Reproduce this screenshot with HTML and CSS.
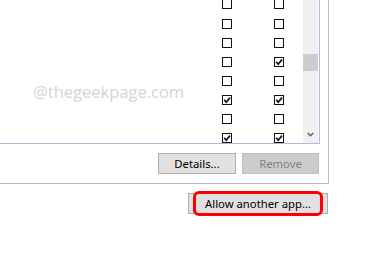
FILE: index.html
```html
<!DOCTYPE html>
<html>
<head>
<meta charset="utf-8">
<link rel="stylesheet" href="styles.css">
</head>
<body>
<div class="group">
  <div class="list">
    <div class="rows">
      <div class="row"><span class="cb"></span><span class="cb"></span></div>
      <div class="row"><span class="cb"></span><span class="cb"></span></div>
      <div class="row"><span class="cb"></span><span class="cb"></span></div>
      <div class="row"><span class="cb"></span><span class="cb on"><svg viewBox="0 0 8 8"><path d="M1.2 3.8 L3.2 6.2 L7 1.6"/></svg></span></div>
      <div class="row"><span class="cb"></span><span class="cb"></span></div>
      <div class="row"><span class="cb on"><svg viewBox="0 0 8 8"><path d="M1.2 3.8 L3.2 6.2 L7 1.6"/></svg></span><span class="cb on"><svg viewBox="0 0 8 8"><path d="M1.2 3.8 L3.2 6.2 L7 1.6"/></svg></span></div>
      <div class="row"><span class="cb"></span><span class="cb"></span></div>
      <div class="row"><span class="cb on"><svg viewBox="0 0 8 8"><path d="M1.2 3.8 L3.2 6.2 L7 1.6"/></svg></span><span class="cb on"><svg viewBox="0 0 8 8"><path d="M1.2 3.8 L3.2 6.2 L7 1.6"/></svg></span></div>
      <div class="watermark">@thegeekpage.com</div>
    </div>
    <div class="scrollbar">
      <div class="thumb"></div>
      <svg class="down" viewBox="0 0 8 5"><path d="M0.8 0.8 L4 4 L7.2 0.8"/></svg>
    </div>
  </div>
  <div class="actions">
    <button class="btn details">Details...</button>
    <button class="btn remove">Remove</button>
  </div>
</div>
<div class="footer">
  <div class="allow-wrap">
    <button class="btn allow">Allow another app...</button>
    <div class="highlight"></div>
  </div>
</div>
</body>
</html>
```
FILE: styles.css
```css
html, body {
  margin: 0;
  padding: 0;
  background: #ffffff;
}
body {
  width: 377px;
  height: 260px;
  overflow: hidden;
  font-family: "Noto Sans", "DejaVu Sans", sans-serif;
}
.group {
  width: 328px;
  height: 183px;
  border-right: 1px solid #b6b7dc;
  border-bottom: 1px solid #b6b7dc;
  display: flex;
  flex-direction: column;
}
.list {
  width: 319px;
  height: 143px;
  border-right: 1px solid #b6b7dc;
  border-bottom: 1px solid #b6b7dc;
  display: flex;
  overflow: hidden;
}
.rows {
  position: relative;
  flex: 1;
  margin-top: -1px;
  padding-left: 222px;
}
.row {
  height: 19px;
  display: flex;
  gap: 42px;
}
.row:first-child {
  height: 20px;
}
.cb {
  box-sizing: border-box;
  width: 10px;
  height: 10px;
  border: 1px solid #111;
  background: #fff;
  display: flex;
  align-items: center;
  justify-content: center;
}
.cb svg {
  width: 8px;
  height: 8px;
}
.cb svg path {
  fill: none;
  stroke: #111;
  stroke-width: 1.7;
}
.watermark {
  position: absolute;
  left: 33px;
  top: 81px;
  font-family: "Open Sans", sans-serif;
  font-size: 16.5px;
  color: #d4d4d4;
  white-space: nowrap;
}
.scrollbar {
  width: 15px;
  margin-right: 1px;
  background: #f0f0f0;
  display: flex;
  flex-direction: column;
  align-items: center;
}
.thumb {
  width: 15px;
  height: 17px;
  margin-top: 54px;
  background: #cdcdcd;
}
.down {
  width: 7px;
  height: 5px;
  margin-top: auto;
  margin-bottom: 6px;
}
.down path {
  fill: none;
  stroke: #606060;
  stroke-width: 1.6;
}
.actions {
  display: flex;
  justify-content: flex-end;
  gap: 6px;
  margin-top: 9px;
  padding-right: 9px;
}
.btn {
  box-sizing: border-box;
  height: 21px;
  padding: 0;
  margin: 0;
  font-family: "Noto Sans", "DejaVu Sans", sans-serif;
  font-size: 11.3px;
  line-height: 19px;
  color: #000;
  background: #e1e1e1;
  border: 1px solid #adadad;
  border-radius: 0;
  text-align: center;
}
.details {
  width: 78px;
}
.remove {
  width: 77px;
  background: #cccccc;
  border-color: #bfbfbf;
  color: #838383;
}
.footer {
  width: 328px;
  display: flex;
  justify-content: flex-end;
  margin-top: 9px;
}
.allow-wrap {
  position: relative;
}
.allow {
  width: 140px;
  display: block;
}
.highlight {
  position: absolute;
  left: 5px;
  top: -2px;
  width: 130px;
  height: 25px;
  box-sizing: border-box;
  border: 3px solid #ff0000;
  border-radius: 6px;
}
```
